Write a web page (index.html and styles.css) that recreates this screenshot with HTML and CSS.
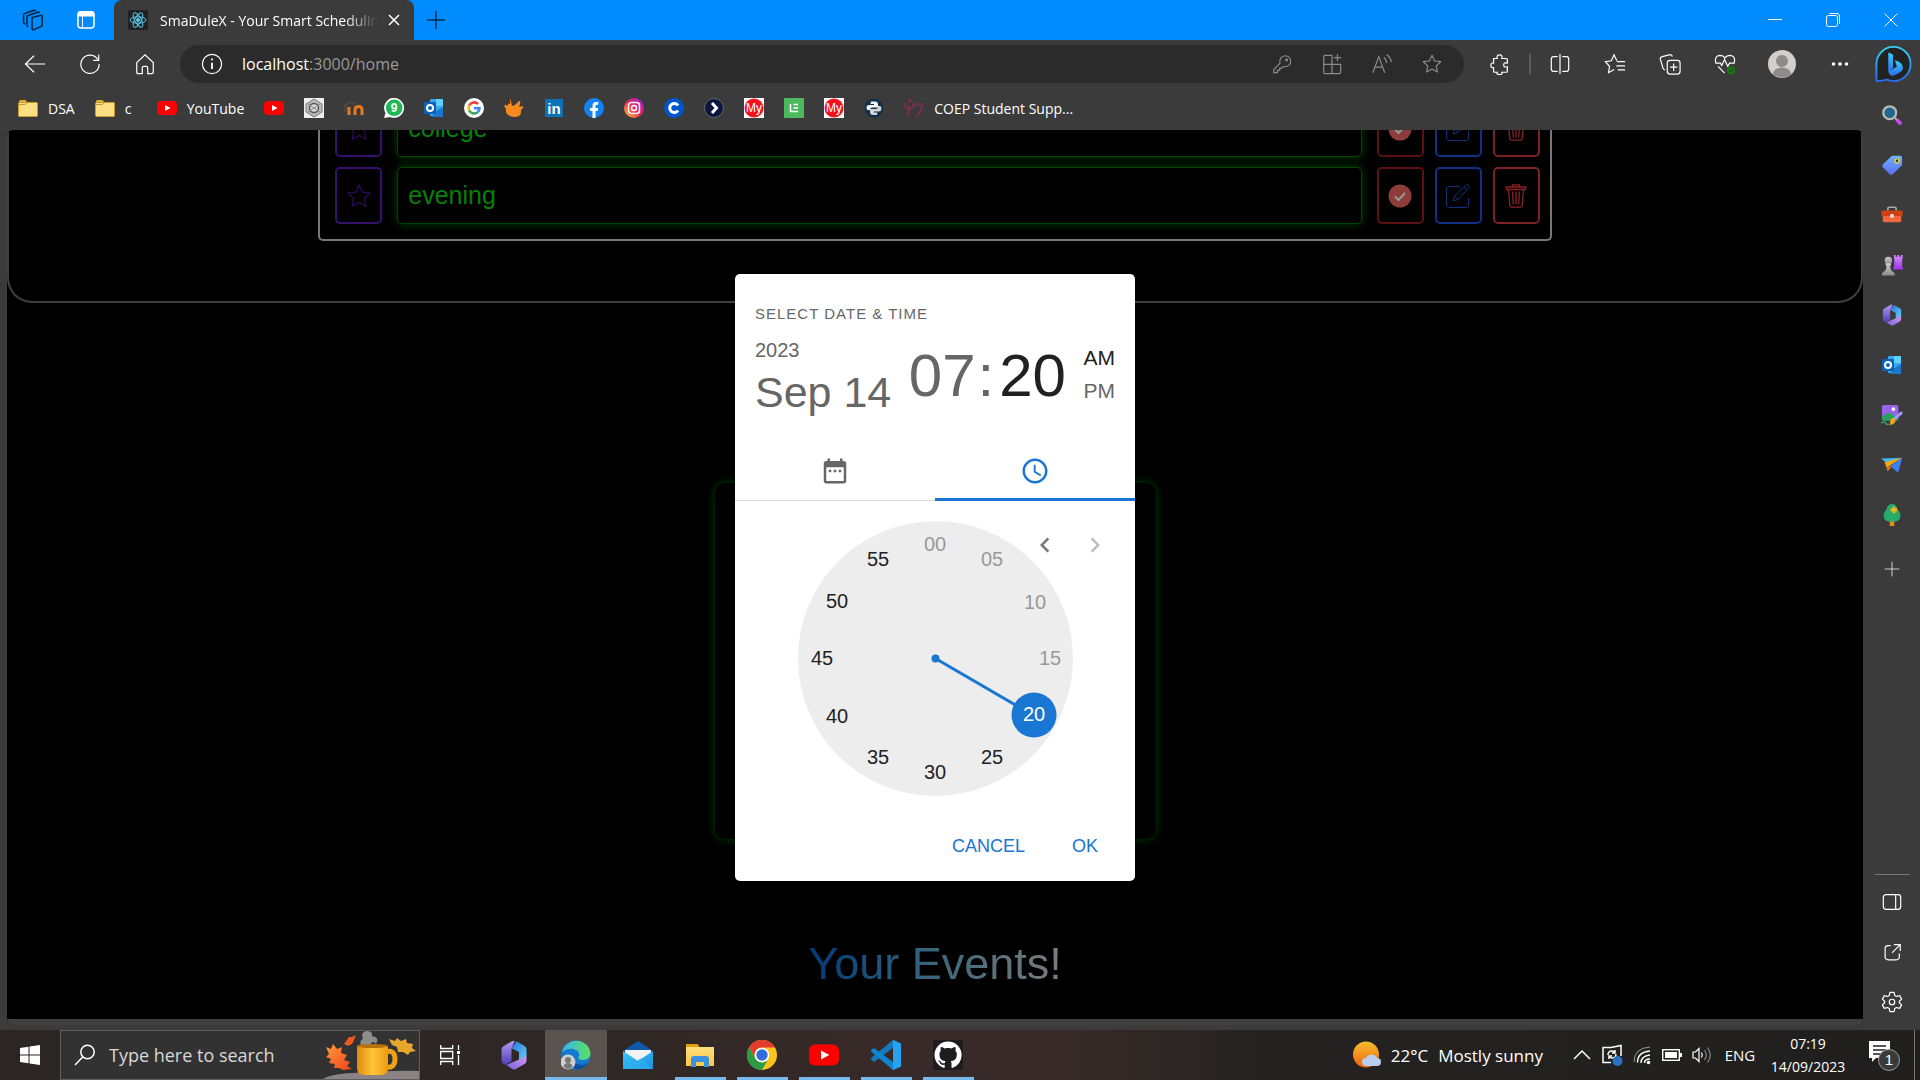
FILE: index.html
```html
<!DOCTYPE html>
<html lang="en">
<head>
<meta charset="utf-8">
<title>SmaDuleX - Your Smart Scheduling</title>
<link rel="stylesheet" href="styles.css">
</head>
<body>
<svg class="defs" aria-hidden="true">
  <defs>
    <linearGradient id="gOffA" x1="0" y1="0" x2="0" y2="1"><stop offset="0" stop-color="#b79af0"/><stop offset="1" stop-color="#4a3fb8"/></linearGradient>
    <linearGradient id="gOffB" x1="0" y1="0" x2="1" y2="1"><stop offset="0" stop-color="#2f6fe0"/><stop offset="1" stop-color="#5fd3f5"/></linearGradient>
    <linearGradient id="gOffC" x1="0" y1="1" x2="1" y2="0"><stop offset="0" stop-color="#7a5fe0"/><stop offset="1" stop-color="#d09af0"/></linearGradient>
    <linearGradient id="gEdge" x1="0" y1="0" x2="1" y2="0"><stop offset="0" stop-color="#35b5f0"/><stop offset="1" stop-color="#5ce05c"/></linearGradient>
    <linearGradient id="gBing" x1="0" y1="0" x2="0" y2="1"><stop offset="0" stop-color="#35d0f5"/><stop offset="1" stop-color="#2a6cf0"/></linearGradient>
    <linearGradient id="gInsta" x1="0" y1="1" x2="1" y2="0"><stop offset="0" stop-color="#ffc92e"/><stop offset=".5" stop-color="#f0255c"/><stop offset="1" stop-color="#8a1ff0"/></linearGradient>
    <linearGradient id="gTag" x1="0" y1="0" x2="0" y2="1"><stop offset="0" stop-color="#6fb4ff"/><stop offset="1" stop-color="#5b6af5"/></linearGradient>
    <linearGradient id="gPurple" x1="0" y1="0" x2="0" y2="1"><stop offset="0" stop-color="#d78cff"/><stop offset="1" stop-color="#a030f0"/></linearGradient>
    <linearGradient id="gGrey" x1="0" y1="0" x2="0" y2="1"><stop offset="0" stop-color="#ccc"/><stop offset="1" stop-color="#8c8c8c"/></linearGradient>
    <linearGradient id="gMug" x1="0" y1="0" x2="1" y2="0"><stop offset="0" stop-color="#e08a0c"/><stop offset=".5" stop-color="#ffc53a"/><stop offset="1" stop-color="#f09a10"/></linearGradient>
    <linearGradient id="gLeaf" x1="0" y1="0" x2="1" y2="1"><stop offset="0" stop-color="#ff9a3a"/><stop offset="1" stop-color="#f0431a"/></linearGradient>
    <linearGradient id="gSun" x1="0" y1="0" x2="0" y2="1"><stop offset="0" stop-color="#f8bd30"/><stop offset="1" stop-color="#f0650c"/></linearGradient>
    <linearGradient id="gMail" x1="0" y1="0" x2="1" y2="1"><stop offset="0" stop-color="#3cc8f5"/><stop offset="1" stop-color="#1b8fe0"/></linearGradient>
    <linearGradient id="gFolder" x1="0" y1="0" x2="0" y2="1"><stop offset="0" stop-color="#ffdf7c"/><stop offset="1" stop-color="#fbc846"/></linearGradient>
  </defs>
  <symbol id="folder" viewBox="0 0 20 20"><path d="M1 3.5A1.500 1.500 0 0 1 2.500 2h5l2 2.500H1z" fill="#e3b132"/><rect x=".5" y="4.500" width="19" height="14" rx="1" fill="#fbdf82" stroke="#c79b2c"/><path d="M.5 6.500h7l2-2.500" stroke="#c79b2c" fill="none"/></symbol>
  <symbol id="yt" viewBox="0 0 20 20"><rect y="3" width="20" height="14" rx="4" fill="#f00"/><path d="M8 7l5.500 3L8 13z" fill="#fff"/></symbol>
  <symbol id="my" viewBox="0 0 20 20"><rect width="20" height="20" fill="#fff"/><circle cx="10" cy="10" r="9.500" fill="#f0141e"/><text x="10" y="14" text-anchor="middle" font-size="12" fill="#fff">My</text></symbol>
  <symbol id="office" viewBox="0 0 24 24"><path d="M14 1l6.500 3.700q1.500.9 1.500 2.600V13l-6 3V9.500l-6-3z" fill="url(#gOffB)"/><path d="M22 12.500v4q0 1.700-1.500 2.600l-7 4q-1.500.8-3 0L6 20l9-4z" fill="url(#gOffC)"/><path d="M12.500.7L10 7v10l-5 3-1.500-.9Q2 18.200 2 16.500v-9q0-1.700 1.500-2.600l7-4q1-.5 2-.2z" fill="url(#gOffA)"/></symbol>
  <symbol id="outlook" viewBox="0 0 20 20"><rect x="6" y="1" width="13" height="17" rx="1" fill="#35a8ee"/><path d="M12 1h7v7h-7z" fill="#5fd0ff"/><path d="M8 19h11V9l-8 5z" fill="#1b78cc"/><rect y="4" width="12" height="12" rx="1" fill="#0b62b8"/><circle cx="6" cy="10" r="3" fill="none" stroke="#fff" stroke-width="2"/></symbol>
  <symbol id="star" viewBox="0 0 24 24"><path d="M12 2.500l2.900 6.200 6.600.8-4.900 4.600 1.300 6.700L12 17.500l-5.900 3.300 1.300-6.700-4.900-4.600 6.600-.8z" fill="none" stroke="currentColor" stroke-linejoin="round"/></symbol>
  <symbol id="done" viewBox="0 0 24 24"><circle cx="12" cy="12" r="11.500" fill="#8c3c3a"/><path d="M7 12.500l3.500 3.500 6.500-7" fill="none" stroke="#999" stroke-width="2"/></symbol>
  <symbol id="edit" viewBox="0 0 24 24"><path d="M14 2.500H3A2.500 2.500 0 0 0 .5 5v16A2.500 2.500 0 0 0 3 23.500h17a2.500 2.500 0 0 0 2.500-2.500v-7M20 1q1.200-1 2.500.2t.4 2.500L12 15.500 7 17l1.500-5zM18 3.500l3 2.500M8.500 12l3.500 3.500" fill="none" stroke="currentColor" stroke-linejoin="round"/></symbol>
  <symbol id="trash" viewBox="0 0 24 24"><path d="M2.500 5.500V3h19v2.500zM8.500 3V.8h7V3M4.500 5.500l1.300 16.200q.1 1.500 1.600 1.500h9.200q1.500 0 1.600-1.500l1.300-16.200M8.500 7.500l.8 13M12 7.500v13M15.500 7.500l-.8 13" fill="none" stroke="currentColor" stroke-width="1.300"/></symbol>
</svg>

<header class="titlebar">
  <button class="tb-btn" aria-label="Workspaces"><svg width="22" height="22" viewBox="0 0 24 24" fill="none" stroke="#06213c" stroke-width="1.600" stroke-linejoin="round"><path d="M10 9.500L20 7q2-.4 2 1.500v9q0 1-1 1.500l-8 3.500q-2 .6-2-1.500V11q0-1 1-1.500M7 19.500l-1-.5q-.5-.3-.5-1V8.500q0-1 1-1.400L17 3.500q1.500-.5 1.800 1M4 16.500l-1.500-.8q-.8-.4-.8-1.200V6.500q0-1 1-1.400L13 1.400q1.500-.4 1.800 1"/></svg></button>
  <button class="tb-btn" aria-label="Tab actions"><svg width="20" height="20" viewBox="0 0 20 20"><rect x="2" y="2" width="16" height="16" rx="3" fill="none" stroke="#fff" stroke-width="1.500"/><path d="M1.500 6.500V4q0-3 3-3h11q3 0 3 3v2.500z" fill="#fff"/><path d="M6.500 6v12" stroke="#fff"/></svg></button>
  <div class="tab">
    <svg width="20" height="20" viewBox="0 0 20 20" fill="none" stroke="#5cc9e6"><rect width="20" height="20" rx="2" fill="#202226" stroke="none"/><ellipse cx="10" cy="10" rx="8" ry="3.200"/><ellipse cx="10" cy="10" rx="8" ry="3.200" transform="rotate(60 10 10)"/><ellipse cx="10" cy="10" rx="8" ry="3.200" transform="rotate(120 10 10)"/><circle cx="10" cy="10" r="1.500" fill="#5cc9e6"/></svg>
    <span class="tab-title">SmaDuleX - Your Smart Scheduling</span>
    <button class="tab-close" aria-label="Close tab"><svg width="12" height="12" viewBox="0 0 12 12" stroke="#fff" stroke-width="1.500"><path d="M1 1l10 10M11 1L1 11"/></svg></button>
  </div>
  <button class="new-tab" aria-label="New tab"><svg width="18" height="18" viewBox="0 0 18 18" stroke="#000"><path d="M9 0v18M0 9h18"/></svg></button>
  <div class="spacer"></div>
  <button class="win-btn" aria-label="Minimise"><svg width="14" height="14" viewBox="0 0 14 14" stroke="#fff"><path d="M0 6.500h14"/></svg></button>
  <button class="win-btn" aria-label="Restore"><svg width="14" height="14" viewBox="0 0 14 14" fill="none" stroke="#fff"><rect x=".5" y="2.500" width="11" height="11" rx="2"/><path d="M3.500.5H11q2.500 0 2.500 2.500v8"/></svg></button>
  <button class="win-btn" aria-label="Close"><svg width="14" height="14" viewBox="0 0 14 14" stroke="#fff"><path d="M.5.5l13 13M13.500.5l-13 13"/></svg></button>
</header>

<nav class="toolbar" aria-label="Browser toolbar">
  <button class="tool" aria-label="Back"><svg class="i" viewBox="0 0 24 24"><path d="M23 12H2M11 3l-9.500 9L11 21"/></svg></button>
  <button class="tool" aria-label="Reload"><svg class="i" viewBox="0 0 24 24"><path d="M20.500 7A10 10 0 1 0 22 12M21.500 2v6h-6"/></svg></button>
  <button class="tool" aria-label="Home"><svg class="i" viewBox="0 0 24 24"><path d="M3 10.500L12 2l9 8.500V21q0 1.500-1.500 1.500H15V16q0-1.500-1.500-1.500h-3Q9 14.500 9 16v6.500H4.500Q3 22.500 3 21z"/></svg></button>
  <div class="address">
    <button class="info" aria-label="Site information"><svg class="i" viewBox="0 0 24 24"><circle cx="12" cy="12" r="10.500"/><path d="M12 10.500v7M12 6v2" stroke-width="2"/></svg></button>
    <div class="url" role="textbox" aria-label="Address">localhost<span>:3000/home</span></div>
    <button class="addr-btn" aria-label="Passwords"><svg class="i" viewBox="0 0 24 24"><path d="M15.500 3a6 6 0 0 1 0 12q-1 0-2-.3L12 16.500H9.500V19H7v2.500H3V18l6.900-7A6 6 0 0 1 15.500 3z"/><circle cx="17" cy="7.500" r="1"/></svg></button>
    <button class="addr-btn" aria-label="Install app"><svg class="i" viewBox="0 0 24 24"><path d="M12 2.500H4.500Q3 2.500 3 4v17q0 1.500 1.500 1.500H20q1.500 0 1.500-1.500v-8.500H3M12 2.500v20M18 1v8M14 5h8"/></svg></button>
    <button class="addr-btn" aria-label="Read aloud"><svg class="i" viewBox="0 0 24 24"><path d="M2 21.500L8.500 4 15 21.500M4.500 15.500h8M14 5q3 2 3 6M17 2q5 3 5 8"/></svg></button>
    <button class="addr-btn" aria-label="Add to favourites"><svg class="i" viewBox="0 0 24 24"><use href="#star"/></svg></button>
  </div>
  <button class="tool" aria-label="Extensions"><svg class="i" viewBox="0 0 24 24"><path d="M5 6h4q-1-4 2.500-4T14 6h5q1 0 1 1v4q-4-1-4 2t4 2v5q0 1-1 1h-5q1 2.500-2.500 2.500T9 21H6q-1 0-1-1v-4q-3 .5-3-2.500T5 11z"/></svg></button>
  <span class="divider"></span>
  <button class="tool" aria-label="Split screen"><svg class="i" viewBox="0 0 24 24"><path d="M9.500 4H5Q2.500 4 2.500 6.500v11Q2.500 20 5 20h4.500M14.500 4H19q2.500 0 2.500 2.500v11Q21.500 20 19 20h-4.500M12 1v22"/></svg></button>
  <button class="tool" aria-label="Favourites"><svg class="i" viewBox="0 0 24 24"><path d="M14 8.500L11 2 8 8.500l-6.500 1L6 14.500 5 21.500l6-3.500M14 9.500h9M13.500 14H23M15 18.500h8"/></svg></button>
  <button class="tool" aria-label="Collections"><svg class="i" viewBox="0 0 24 24"><rect x="9" y="8" width="14" height="15" rx="3"/><path d="M6.500 18.500q-2-.5-2.300-2.500L1.500 7Q1 4.500 3.500 4L11 2q3-.7 3.500 2M16 11.500v8M12 15.500h8"/></svg></button>
  <button class="tool" aria-label="Browser essentials"><svg class="i" viewBox="0 0 24 24"><path d="M2 11Q0 3 6.500 2.500 10 2.500 12 5.500 14 2.500 17.500 2.500 24 3 22 11h-5l-2 3.500L11.500 7 8.500 13.500 7 11zM4.500 14.500l7 7.500"/><circle cx="18.500" cy="19" r="4.500" fill="#107c10" stroke="none"/><path d="M16.500 19l1.500 1.500 2.500-3" stroke="#3b3b3b"/></svg></button>
  <button class="tool tool-wide" aria-label="Profile"><svg width="28" height="28" viewBox="0 0 28 28"><circle cx="14" cy="14" r="14" fill="#d2d0ce"/><circle cx="14" cy="11" r="6" fill="#8f8b88"/><path d="M4.500 24q2-6.500 9.500-6.500T23.500 24a14 14 0 0 1-19 0z" fill="#8f8b88"/></svg></button>
  <button class="tool" aria-label="Settings and more"><svg width="18" height="18" viewBox="0 0 18 18" fill="#fff"><circle cx="2.500" cy="9" r="1.800"/><circle cx="9" cy="9" r="1.800"/><circle cx="15.500" cy="9" r="1.800"/></svg></button>
  <button class="bing" aria-label="Bing chat"><svg width="38" height="38" viewBox="0 0 40 40"><path d="M1.500 38V20A18.500 18.500 0 1 1 20 38.500q-4 0-8-1.500-4 1.500-10.500 1z" fill="#222"/><path d="M1.500 38V20A18 18 0 1 1 20 38q-4 0-8-1.500-4 1.500-10.500 1.500z" fill="none" stroke="url(#gBing)" stroke-width="2"/><path d="M14 8l5 2v14l-5 5z" fill="url(#gBing)"/><path d="M21 16q8 2 8.500 8 0 3-3.500 5l-7 3.500q-4 0-5-4.500l9-5z" fill="url(#gBing)"/></svg></button>
</nav>

<main class="browser">
  <div class="stage">
    <nav class="bookmarks" aria-label="Bookmarks">
      <a class="dir" href="#"><svg><use href="#folder"/></svg>DSA</a>
      <a class="dir" href="#"><svg><use href="#folder"/></svg>c</a>
      <a href="#"><svg><use href="#yt"/></svg>YouTube</a>
      <a href="#" aria-label="YouTube"><svg><use href="#yt"/></svg></a>
      <a href="#" aria-label="College"><svg viewBox="0 0 20 20"><rect width="20" height="20" fill="#eee"/><path d="M10 1l8 5v8l-8 5-8-5V6z" fill="#bbb" stroke="#777"/><circle cx="10" cy="10" r="4.500" fill="#ddd" stroke="#555" stroke-width="1.500"/><path d="M4 14l12-8M4 6l12 8" stroke="#888"/></svg></a>
      <a href="#" aria-label="Moodle"><svg viewBox="0 0 20 20" fill="none" stroke="#e67a22" stroke-width="3"><path d="M5 17V9M11 17v-5q0-3.500 3.500-3.500T18 12v5"/><path d="M0 8l6-4 5 2M1.500 8v6" stroke="#55473c" stroke-width="2"/></svg></a>
      <a href="#" aria-label="WhatsApp"><svg viewBox="0 0 20 20"><path d="M0 20l1.500-5A10 10 0 1 1 6 19z" fill="#fff"/><circle cx="10.200" cy="9.800" r="8.300" fill="#1fb855"/><text x="10" y="14" text-anchor="middle" font-size="12" font-weight="bold" fill="#fff">9</text></svg></a>
      <a href="#" aria-label="Outlook"><svg><use href="#outlook"/></svg></a>
      <a href="#" aria-label="Google"><svg viewBox="0 0 20 20" fill="none" stroke-width="2.600"><circle cx="10" cy="10" r="10" fill="#fff"/><path d="M14 6A5.500 5.500 0 0 0 5.200 7.500" stroke="#ea4335"/><path d="M5.200 7.500a5.500 5.500 0 0 0 0 5" stroke="#fbbc05"/><path d="M5.200 12.500a5.500 5.500 0 0 0 8.600 1.600" stroke="#34a853"/><path d="M13.800 14.100q1.700-1.600 1.700-3.800H10" stroke="#4285f4"/></svg></a>
      <a href="#" aria-label="Firebase"><svg viewBox="0 0 20 20"><path d="M4 2q2-2 3 1l1 5 3-1 4-4q2 0 1 3l-1 3 4-1q1 2-2 4 1 7-7 7Q1 18 2 11L0 8q2-2 4 0z" fill="#f58a1f"/><path d="M3 0q4 1 3 6l-3-1z" fill="#5a2c10"/></svg></a>
      <a href="#" aria-label="LinkedIn"><svg viewBox="0 0 20 20"><rect x="1" y="1" width="18" height="18" fill="#0a73b8"/><text x="10" y="15.500" text-anchor="middle" font-size="15" font-weight="bold" fill="#fff">in</text></svg></a>
      <a href="#" aria-label="Facebook"><svg viewBox="0 0 20 20"><circle cx="10" cy="10" r="10" fill="#1383f2"/><path d="M8.500 20v-7H6v-3h2.500V8q0-4 3.800-4h2v2.800h-1.500q-1.300 0-1.300 1.400V10h2.700l-.5 3h-2.200v7z" fill="#fff"/></svg></a>
      <a href="#" aria-label="Instagram"><svg viewBox="0 0 20 20" fill="none" stroke="#fff" stroke-width="1.500"><circle cx="10" cy="10" r="10" fill="url(#gInsta)" stroke="none"/><rect x="4.500" y="4.500" width="11" height="11" rx="3"/><circle cx="10" cy="10" r="2.500"/></svg></a>
      <a href="#" aria-label="Coursera"><svg viewBox="0 0 20 20"><circle cx="10" cy="10" r="10" fill="#0056d2"/><path d="M14 7.500a4.500 4.500 0 1 0 0 5" fill="none" stroke="#fff" stroke-width="3"/></svg></a>
      <a href="#" aria-label="Scaler"><svg viewBox="0 0 20 20"><circle cx="10" cy="10" r="9.500" fill="#0c1740" stroke="#666"/><path d="M8 5l4.500 5L8 15" fill="none" stroke="#fff" stroke-width="3"/></svg></a>
      <a href="#" aria-label="My portal"><svg><use href="#my"/></svg></a>
      <a href="#" aria-label="LE"><svg viewBox="0 0 20 20" fill="none" stroke="#fff" stroke-width="1.500"><rect width="20" height="20" fill="#4db860" stroke="none"/><path d="M6.500 6v7.500H14M9.500 6.500H14M9.500 10H14"/></svg></a>
      <a href="#" aria-label="My account"><svg><use href="#my"/></svg></a>
      <a href="#" aria-label="Python"><svg viewBox="0 0 20 20"><circle cx="10" cy="10" r="9.500" fill="#123049"/><path d="M7 3.500h4q3 0 3 3v3H8Q6 9.500 6 12H4Q2.500 12 2.500 9.500T5 7h5V6H6.500z" fill="#f4f4f4"/><path d="M13 17H9q-3 0-3-3v-3h6q2 0 2-3h2q1.500 0 1.500 2.500T15 13.500h-5v1h3.500z" fill="#d4d4d4"/></svg></a>
      <a href="#"><svg viewBox="0 0 20 20" fill="none" stroke="#8c2a50" stroke-width="1.600"><path d="M4 7q3 4-1 12M1 5q0 6 4 6 3 0 5-5M10 8q2-4 4-1 3-3 4 0 0 6-6 12"/><circle cx="6" cy="3" r="1"/></svg>COEP Student Supp...</a>
    </nav>

    <div class="viewport">
      <div class="page">
        <section class="tasks">
          <ul class="task-list">
            <li>
              <button class="sq sq-star" aria-label="Star college"><svg><use href="#star"/></svg></button>
              <input class="task" type="text" value="college" aria-label="Task college" readonly>
              <div class="actions">
                <button class="sq sq-done" aria-label="Done"><svg><use href="#done"/></svg></button>
                <button class="sq sq-edit" aria-label="Edit"><svg><use href="#edit"/></svg></button>
                <button class="sq sq-trash" aria-label="Delete"><svg><use href="#trash"/></svg></button>
              </div>
            </li>
            <li>
              <button class="sq sq-star" aria-label="Star evening"><svg><use href="#star"/></svg></button>
              <input class="task" type="text" value="evening" aria-label="Task evening" readonly>
              <div class="actions">
                <button class="sq sq-done" aria-label="Done"><svg><use href="#done"/></svg></button>
                <button class="sq sq-edit" aria-label="Edit"><svg><use href="#edit"/></svg></button>
                <button class="sq sq-trash" aria-label="Delete"><svg><use href="#trash"/></svg></button>
              </div>
            </li>
          </ul>
        </section>
        <section class="event-card"></section>
        <h2 class="events-title">Your Events!</h2>
      </div>
      <div class="overlay">
        <div class="dialog" role="dialog" aria-label="Select date and time">
          <div class="dlg-head">
            <div class="overline">SELECT DATE &amp; TIME</div>
            <div class="dlg-values">
              <div class="dlg-date">
                <button class="year">2023</button>
                <button class="day">Sep 14</button>
              </div>
              <div class="dlg-time">
                <button class="big">07</button><span class="big colon">:</span><button class="big on">20</button>
              </div>
              <div class="ampm">
                <button class="on">AM</button>
                <button>PM</button>
              </div>
            </div>
          </div>
          <div class="dlg-tabs" role="tablist">
            <button role="tab" aria-label="Pick date"><svg viewBox="0 0 24 24"><path d="M9 11H7v2h2v-2zm4 0h-2v2h2v-2zm4 0h-2v2h2v-2zm2-7h-1V2h-2v2H8V2H6v2H5c-1.110 0-1.990.9-1.990 2L3 20c0 1.100.89 2 2 2h14c1.100 0 2-.9 2-2V6c0-1.100-.9-2-2-2zm0 16H5V9h14v11z"/></svg></button>
            <button class="selected" role="tab" aria-label="Pick time"><svg viewBox="0 0 24 24"><path d="M11.990 2C6.470 2 2 6.480 2 12s4.470 10 9.990 10C17.520 22 22 17.520 22 12S17.520 2 11.990 2zM12 20c-4.420 0-8-3.580-8-8s3.580-8 8-8 8 3.580 8 8-3.580 8-8 8z"/><path d="M12.500 7H11v6l5.250 3.150.75-1.230-4.500-2.670z"/></svg></button>
          </div>
          <div class="clock">
            <svg class="dial" viewBox="0 0 275 275">
              <circle cx="137.500" cy="137.500" r="137.500" fill="#ededed"/>
              <path d="M137.500 137.500l98 57" stroke="#1976d2" stroke-width="3"/>
              <circle cx="137.500" cy="137.500" r="4" fill="#1976d2"/>
              <circle cx="236" cy="194" r="22.500" fill="#1976d2"/>
              <g class="off"><text x="137" y="30">00</text><text x="194" y="45">05</text><text x="237" y="88">10</text><text x="252" y="144">15</text></g>
              <text class="picked" x="236" y="200">20</text>
              <g><text x="194" y="243">25</text><text x="137" y="258">30</text><text x="80" y="243">35</text><text x="39" y="202">40</text><text x="24" y="144">45</text><text x="39" y="87">50</text><text x="80" y="45">55</text></g>
            </svg>
            <div class="arrows">
              <button aria-label="Previous"><svg viewBox="0 0 24 24"><path d="M15.410 16.590L10.830 12l4.580-4.590L14 6l-6 6 6 6 1.410-1.410z"/></svg></button>
              <button aria-label="Next" disabled><svg viewBox="0 0 24 24"><path d="M8.590 16.590L13.170 12 8.590 7.410 10 6l6 6-6 6-1.410-1.410z"/></svg></button>
            </div>
          </div>
          <div class="dlg-actions">
            <button>CANCEL</button>
            <button>OK</button>
          </div>
        </div>
      </div>
      <div class="hscroll"></div>
    </div>
  </div>

  <aside class="sidebar">
    <button aria-label="Search"><svg viewBox="0 0 24 24"><path d="M15 15l6 6" stroke="#b8b8b8" stroke-width="2"/><path d="M17 17l5 5" stroke="#c548f5" stroke-width="4"/><circle cx="9.500" cy="9.500" r="7" fill="#1f6690" stroke="#b9b9b4" stroke-width="2.500"/></svg></button>
    <button aria-label="Shopping"><svg viewBox="0 0 24 24"><path d="M12 2h9q2 0 2 2v8L13 22q-2 1.500-3.500 0L2 14.500q-1.200-1.500 0-3z" fill="url(#gTag)"/><circle cx="17.500" cy="7.500" r="2.200" fill="#245" stroke="#f5d020" stroke-width="1.500"/></svg></button>
    <button aria-label="Tools"><svg viewBox="0 0 24 24"><path d="M7.500 7V5q0-1.500 1.500-1.500h6q1.500 0 1.500 1.500v2" fill="none" stroke="#aaa" stroke-width="1.800"/><rect x="2" y="10" width="20" height="10" rx="1.500" fill="#f0683c"/><rect x=".5" y="7" width="23" height="6" rx="1" fill="#cf4010"/><rect x="10" y="11" width="4" height="4" rx="1" fill="#ddd"/></svg></button>
    <button aria-label="Games"><svg viewBox="0 0 24 24"><path d="M14 1h2v2h2V1h2v2h2V1h2l-1 6v6l1.500 4H13l1.500-4V7z" fill="url(#gPurple)"/><circle cx="8" cy="7" r="4" fill="url(#gGrey)"/><path d="M5 10h6v2l-1 1q0 5 4 7 1 1 1 3.500H1Q1 21 2 20q4-2 4-7l-1-1z" fill="url(#gGrey)"/></svg></button>
    <button aria-label="Microsoft 365"><svg><use href="#office"/></svg></button>
    <button aria-label="Outlook"><svg viewBox="-1 -1 22 22"><use href="#outlook" width="20" height="20"/></svg></button>
    <button aria-label="Designer"><svg viewBox="0 0 24 24"><rect x="1" y="1" width="18" height="17" rx="2" fill="#9b62ea"/><path d="M1 14l6-4q2-1 4 0l7 6v2H1z" fill="#22a45a"/><circle cx="13.500" cy="5.500" r="2" fill="#fff"/><path d="M14 17l9-8" stroke="#9aa4f5" stroke-width="3"/><path d="M10 20q0-5 4-5l2 3q-1 4-6 5z" fill="#f5a81c"/><path d="M0 21q4-3 5 0 1 2 4 1" stroke="#2fae6a" fill="none" stroke-width="1.500"/></svg></button>
    <button aria-label="Drop"><svg viewBox="0 0 24 24"><path d="M0 5l23-1L9 12z" fill="#46b8ea"/><path d="M23 4L10 13l8 7q1 0 1.500-2z" fill="#3b7ff0"/><path d="M23 4L4 9l2 6z" fill="#f5a50c"/><path d="M6 15l4-2 1 2-4 4z" fill="#d8780c"/></svg></button>
    <button aria-label="Tree"><svg viewBox="0 0 24 24"><rect x="9.500" y="16" width="5" height="8" fill="#e08c10"/><path d="M12 0q5 0 6 6 4 3 3 8-1 5-5 5H8q-4 0-5-5-1-5 3-8 1-6 6-6z" fill="#27ab6c"/><path d="M14 3v7M10.500 6.500h7" stroke="#f5b91c" stroke-width="3"/></svg></button>
    <button class="add" aria-label="Customise"><svg viewBox="0 0 24 24" stroke="#ddd"><path d="M12 4v16M4 12h16"/></svg></button>
    <span class="side-rule"></span>
    <button aria-label="Hide sidebar"><svg class="i" viewBox="0 0 24 24"><rect x="2.500" y="4" width="19" height="16" rx="3"/><path d="M16 4v16"/></svg></button>
    <button aria-label="Open link"><svg class="i" viewBox="0 0 24 24"><path d="M10.500 5H8Q4.500 5 4.500 8v9q0 3.500 3.500 3.500h8.500q3.500 0 3.500-3.500v-3.500M14 4h7v7M21 4l-9 9"/></svg></button>
    <button aria-label="Settings"><svg class="i" viewBox="0 0 24 24"><path d="M9.800 1.500h4.400l.8 3.300 2 1.200 3.300-1 2.200 3.900-2.500 2.300v1.600l2.500 2.300-2.200 3.900-3.300-1-2 1.200-.8 3.300H9.800L9 19.200l-2-1.200-3.300 1-2.200-3.900L4 12.800v-1.600L1.500 8.900 3.700 5 7 6l2-1.200z" stroke-linejoin="round"/><circle cx="12" cy="12" r="3"/></svg></button>
  </aside>
</main>

<footer class="taskbar">
  <button class="start" aria-label="Start"><svg width="20" height="20" viewBox="0 0 20 20" fill="#fff"><path d="M0 3l8.500-1.300v7.800H0zM9.500 1.500L20 0v9.500H9.500zM0 10.500h8.500v7.800L0 17zM9.500 10.500H20V20L9.500 18.500z"/></svg></button>
  <label class="search">
    <svg width="22" height="22" viewBox="0 0 22 22" fill="none" stroke="#fff" stroke-width="1.500"><circle cx="13.500" cy="8" r="6.700"/><path d="M8.700 13L1 21"/></svg>
    <input type="text" placeholder="Type here to search" aria-label="Search">
    <svg class="mug" width="96" height="48" viewBox="0 0 96 48"><path d="M0 48Q8 43 30 42q40-3 68-2v8z" fill="#8b8284"/><path d="M38 15q-2-6 2-7-3-6 3-8 7 0 6 5 8 1 4 8-4-5-6 2z" fill="#8d8d8d"/><path d="M62 21q10-3 10 7t-10 8" fill="none" stroke="#f0a014" stroke-width="5"/><path d="M34 15h31v22q0 7-7 7H41q-7 0-7-7z" fill="url(#gMug)"/><ellipse cx="49.500" cy="15" rx="15.500" ry="2" fill="#b8720c"/><path d="M3 16l5 2 2-5 4 5 5-2-1 6 6 2-3 5 6 2-3 4 5 3-9 1-4-2-5 0 1-4-6-1 2-4-5-2 3-3z" fill="url(#gLeaf)"/><path d="M21 13l3-4 2-3 3 0 4-2-2 5-2 4-4 2z" fill="#f05a20"/><path d="M66 8l6 2 2-3 4 3 5-2 1 4 6 1-1 4 4 3-6 1-2 3-5-3-5 0-1-5-5-2z" fill="#e6a72c"/></svg>
  </label>
  <button class="app taskview" aria-label="Task view"><svg width="20" height="22" viewBox="0 0 20 22" fill="none" stroke="#fff" stroke-width="1.300"><path d="M.7 1v3.500h12V1M.7 21v-3.500h12V21M.7 7.500h12v7H.7zM18.500 1v5M18.500 11v10"/><path d="M17 8.500h3" stroke-width="3"/></svg></button>
  <button class="app" aria-label="Microsoft 365"><svg width="30" height="30"><use href="#office"/></svg></button>
  <button class="app run active" aria-label="Edge"><svg width="30" height="30" viewBox="0 0 30 30"><circle cx="15" cy="15" r="14.500" fill="#1479cf"/><path d="M1 12A14.500 14.500 0 0 1 29.500 13q0 7-8 7-5 0-4-3 2-3-1-6Q10 6 1 12z" fill="url(#gEdge)"/><path d="M11 15q0 9 9 10 4 0 7-2-5 7-12 6.500Q8 26 11 15z" fill="#0c4f9e"/><circle cx="7" cy="22" r="7.500" fill="#cfcfcf"/><circle cx="7" cy="20" r="3" fill="#777"/><path d="M2.500 27q.5-4 4.500-4t4.500 4q-4 4-9 0z" fill="#777"/></svg></button>
  <button class="app" aria-label="Mail"><svg width="30" height="30" viewBox="0 0 30 30"><path d="M0 11L15 1l15 10z" fill="#0d5bad"/><path d="M2 10h26v12H2z" fill="#f2f2f2"/><path d="M0 11l15 10L30 11v18H0z" fill="url(#gMail)"/><path d="M0 29L18 18l12 11z" fill="#2fb2f0" opacity=".6"/></svg></button>
  <button class="app run" aria-label="File Explorer"><svg width="28" height="28" viewBox="0 0 28 28"><path d="M0 3h12l2 4H0z" fill="#e0a010"/><path d="M0 6h28v19H0z" fill="url(#gFolder)"/><path d="M5 26V18q0-3 3-3h12q3 0 3 3v8h-5v-5h-8v5z" fill="#3b93dd"/></svg></button>
  <button class="app run" aria-label="Chrome"><svg width="30" height="30" viewBox="0 0 30 30"><circle cx="15" cy="15" r="15" fill="#fcc31e"/><path d="M2 7.500A15 15 0 0 1 28 7.500H15A7.500 7.500 0 0 0 8 18z" fill="#e33b2e"/><path d="M2 7.500L8.500 18.700A7.500 7.500 0 0 0 21 19.500L15 30A15 15 0 0 1 2 7.500z" fill="#2a9c47"/><circle cx="15" cy="15" r="7.300" fill="#fff"/><circle cx="15" cy="15" r="5.700" fill="#2f6de0"/></svg></button>
  <button class="app run" aria-label="YouTube"><svg width="30" height="30"><use href="#yt"/></svg></button>
  <button class="app run" aria-label="Visual Studio Code"><svg width="30" height="30" viewBox="0 0 30 30"><path d="M22 0l8 3.500v23L22 30V8L3 22l-3-2.500v-1.500z" fill="#1578bd"/><path d="M22 30L0 11.500V10l3-2 19 14z" fill="#0f84d0"/><path d="M22 0l8 3.500v23L22 30z" fill="#27a2ef"/></svg></button>
  <button class="app run" aria-label="GitHub"><svg width="30" height="30" viewBox="0 0 30 30"><rect width="30" height="30" fill="#1f1c20"/><path transform="translate(1.500 1.500) scale(1.700)" fill="#fff" d="M8 0C3.580 0 0 3.580 0 8c0 3.540 2.290 6.530 5.470 7.590.4.070.55-.17.55-.38 0-.19-.01-.82-.01-1.490-2.010.37-2.530-.49-2.690-.94-.09-.23-.48-.94-.82-1.130-.28-.15-.68-.52-.01-.53.63-.01 1.080.58 1.230.82.72 1.210 1.870.87 2.330.66.07-.52.28-.87.51-1.070-1.780-.2-3.640-.89-3.640-3.950 0-.87.31-1.590.82-2.150-.08-.2-.36-1.020.08-2.120 0 0 .67-.21 2.200.82.64-.18 1.320-.27 2-.27.68 0 1.360.09 2 .27 1.530-1.040 2.200-.82 2.200-.82.44 1.100.16 1.920.08 2.120.51.56.82 1.270.82 2.150 0 3.070-1.870 3.750-3.650 3.950.29.25.54.73.54 1.480 0 1.070-.01 1.930-.01 2.200 0 .21.15.46.55.38A8.013 8.013 0 0 0 16 8c0-4.420-3.580-8-8-8z"/></svg></button>
  <div class="spacer"></div>
  <button class="weather"><svg width="28" height="28" viewBox="0 0 28 28"><circle cx="13" cy="13.500" r="13" fill="url(#gSun)"/><path d="M13 25a4 4 0 0 1 0-8 6 6 0 0 1 11 0 4 4 0 0 1 0 8z" fill="#b9cdf3"/></svg><span>22°C</span><span>Mostly sunny</span></button>
  <button class="tray" aria-label="Show hidden icons"><svg width="18" height="18" viewBox="0 0 18 18" fill="none" stroke="#fff" stroke-width="1.500"><path d="M1 13l8-8 8 8"/></svg></button>
  <button class="tray" aria-label="Update"><svg width="22" height="22" viewBox="0 0 22 22" fill="none" stroke="#fff" stroke-width="1.500"><path d="M20 12V1.500L10 3.500H2v15h8M7 11q0-4 4-4 2 0 3 2M14 6v3h-3M15 10q0 4-4 4-2 0-3-2M8 15v-3h3"/><circle cx="16.500" cy="17" r="5" fill="#2b72c4" stroke="none"/></svg></button>
  <button class="tray" aria-label="Wi-Fi"><svg width="18" height="20" viewBox="0 0 18 20" fill="none" stroke="#fff"><path d="M1 17Q1 3 17 2" stroke="#999"/><path d="M4.500 17.500Q4.500 7 17 6M8 18q0-7 9-8M11.500 18q0-4 5.500-4" stroke-width="1.300"/><circle cx="15.500" cy="17.500" r="1.800" fill="#fff" stroke="none"/></svg></button>
  <button class="tray" aria-label="Battery"><svg width="20" height="14" viewBox="0 0 20 14"><rect x=".7" y="1.700" width="16.600" height="10.600" fill="none" stroke="#fff" stroke-width="1.400"/><rect x="3" y="4" width="12" height="6" fill="#fff"/><path d="M18 5h2v4h-2z" fill="#fff"/></svg></button>
  <button class="tray" aria-label="Volume"><svg width="20" height="18" viewBox="0 0 20 18" fill="none" stroke="#fff" stroke-width="1.200"><path d="M1 6h2.500L7 2.500v13L3.500 12H1zM9.500 6.500q1.500 2.500 0 5"/><path d="M12.500 4q3.500 5 0 10M15.500 1.500q5.500 7.500 0 15" stroke="#888"/></svg></button>
  <button class="lang">ENG</button>
  <button class="datetime"><span>07:19</span><span>14/09/2023</span></button>
  <button class="notif" aria-label="Notifications"><svg width="34" height="34" viewBox="0 0 34 34"><path d="M2 3h21v17H9l-4 4v-4H2z" fill="#fff"/><path d="M6 8h13M6 12h13M6 16h8" stroke="#222" stroke-width="1.500"/><circle cx="22" cy="22" r="10.500" fill="#3a3a3a" stroke="#999"/><text x="22" y="27" text-anchor="middle" font-size="15" fill="#fff">1</text></svg></button>
</footer>
</body>
</html>
```
FILE: styles.css
```css
* { box-sizing: border-box; }

body {
  margin: 0;
  height: 100vh;
  display: flex;
  flex-direction: column;
  overflow: hidden;
  background: #3b3b3b;
  color: #fff;
  font-family: "Open Sans", "Noto Sans", sans-serif;
  font-size: 14px;
}

button {
  margin: 0;
  padding: 0;
  border: 0;
  background: none;
  color: inherit;
  font: inherit;
  display: flex;
  align-items: center;
  justify-content: center;
}

input { min-width: 0; font: inherit; outline: 0; }
a { color: inherit; text-decoration: none; }
svg { display: block; flex: none; }
.defs { position: absolute; width: 0; height: 0; }
.spacer { flex: 1; }
.i { width: 22px; height: 22px; fill: none; stroke: currentColor; stroke-width: 1.3; }

/* window title bar */
.titlebar { display: flex; height: 40px; flex: none; padding-left: 6px; background: #008cff; }
.tb-btn { width: 53px; }
.tab {
  display: flex;
  align-items: center;
  width: 300px;
  margin-left: 2px;
  padding: 0 4px 0 14px;
  background: #3b3b3b;
  border-radius: 8px 8px 0 0;
}
.tab-title {
  flex: 1;
  margin-left: 12px;
  overflow: hidden;
  white-space: nowrap;
  mask-image: linear-gradient(90deg, #000 85%, transparent);
}
.tab-close { width: 32px; height: 32px; }
.new-tab { width: 43px; }
.win-btn { width: 58px; }

/* toolbar */
.toolbar { display: flex; align-items: center; height: 48px; flex: none; padding-left: 7px; }
.tool { width: 55px; height: 40px; }
.tool-wide { width: 60px; }
.divider { width: 2px; height: 20px; margin: 0 1px 0 2px; background: #5c5c5c; }
.bing { width: 53px; height: 40px; }
.address {
  flex: 1;
  display: flex;
  align-items: center;
  height: 38px;
  margin: 0 8px;
  padding: 0 7px;
  border-radius: 19px;
  background: #2b2b2b;
}
.info { width: 50px; }
.url { flex: 1; margin-left: 5px; font-size: 16px; }
.url span { color: #999; }
.addr-btn { width: 50px; color: #8c8c8c; }

.browser { flex: 1; min-height: 0; display: flex; }
.stage { flex: 1; min-width: 0; display: flex; flex-direction: column; }

/* bookmarks */
.bookmarks { display: flex; align-items: center; gap: 20px; height: 42px; flex: none; padding: 0 0 2px 18px; }
.bookmarks a { display: flex; align-items: center; gap: 10px; white-space: nowrap; }
.bookmarks .dir { min-width: 42px; }
.bookmarks svg { width: 20px; height: 20px; font-family: "Liberation Sans", Arial, sans-serif; }

/* web page */
.viewport {
  position: relative;
  flex: 1;
  min-height: 0;
  display: flex;
  flex-direction: column;
  margin: 0 1px 5px 7px;
  overflow: hidden;
  border-radius: 6px;
  background: #000;
  font-family: "Liberation Sans", Arial, sans-serif;
}
.page { flex: 1; min-height: 0; display: flex; flex-direction: column; align-items: center; overflow: hidden; }
.hscroll { height: 6px; flex: none; background: #404040; }

.tasks {
  flex: none;
  width: 100%;
  margin-top: -30px;
  padding-bottom: 60px;
  border: 2px solid #404040;
  border-top: 0;
  border-radius: 0 0 25px 25px;
}
.task-list {
  display: flex;
  flex-direction: column;
  gap: 10px;
  width: 66.6%;
  margin: 0 auto;
  padding: 0 10px 15px 15px;
  border: 2px solid #777;
  border-top: 0;
  border-radius: 0 0 5px 5px;
  list-style: none;
}
.task-list li { display: flex; gap: 15px; height: 57px; }
.sq { width: 47px; height: 57px; border: 2px solid; border-radius: 5px; }
.sq svg { width: 24px; height: 24px; }
.sq-star { border-color: #35106c; color: #2c0d58; }
.sq-star svg { width: 28px; height: 28px; }
.sq-done { border-color: #5e1114; }
.sq-edit { border-color: #12308a; color: #10307c; }
.sq-trash { border-color: #7c2226; color: #8c2226; }
.task {
  flex: 1;
  padding: 0 10px;
  border: 1px solid #004600;
  border-radius: 5px;
  background: #000;
  box-shadow: 0 0 10px #004000;
  color: #088008;
  font-size: 25px;
}
.actions { display: flex; gap: 11px; }
.event-card {
  flex: none;
  width: 441px;
  height: 356px;
  margin: 180px 0 98px;
  border-radius: 10px;
  box-shadow: 0 0 10px #004000;
}
.events-title {
  flex: none;
  margin: 0;
  font-size: 45px;
  line-height: 54px;
  font-weight: 400;
  background: linear-gradient(90deg, #003a78, #34647c 45%, #7c7c7c);
  background-clip: text;
  -webkit-background-clip: text;
  color: transparent;
}

/* date and time dialog */
.overlay { position: absolute; inset: 0; display: grid; place-items: center; }
.dialog { width: 400px; border-radius: 5px; background: #fff; color: #666; overflow: hidden; }
.dlg-head { padding: 20px 20px 22px; }
.overline { font-size: 15px; line-height: 40px; letter-spacing: 1px; }
.dlg-values { display: flex; justify-content: space-between; align-items: flex-start; }
.dlg-date { display: flex; flex-direction: column; align-items: flex-start; }
.year { font-size: 20px; line-height: 32px; }
.day { font-size: 43px; line-height: 53px; }
.dlg-time { display: flex; padding-top: 7px; }
.big { font-size: 60px; line-height: 70px; }
.colon { margin: 0 5px 0 2px; }
.ampm { padding-top: 7px; font-size: 21px; line-height: 33px; }
.on { color: #212121; }
.dlg-tabs { display: flex; height: 60px; border-bottom: 1px solid #ddd; }
.dlg-tabs button { flex: 1; height: 60px; }
.dlg-tabs svg, .arrows svg { width: 30px; height: 30px; fill: currentColor; }
.dlg-tabs .selected { color: #1976d2; border-bottom: 3px solid; padding-top: 3px; }
.clock { position: relative; display: flex; justify-content: center; padding: 20px 0 15px; }
.dial { width: 275px; height: 275px; font-size: 20px; text-anchor: middle; fill: #212121; }
.dial .off { fill: #999; }
.dial .picked { fill: #fff; }
.arrows { position: absolute; top: 19px; right: 15px; display: flex; }
.arrows button { width: 50px; height: 50px; color: #757575; }
.arrows button:disabled { color: #bdbdbd; }
.dlg-actions { display: flex; justify-content: flex-end; gap: 10px; padding: 12px 10px; color: #1976d2; font-size: 18px; }
.dlg-actions button { min-width: 80px; height: 46px; padding: 0 10px; }

/* sidebar */
.sidebar { width: 56px; flex: none; display: flex; flex-direction: column; align-items: center; padding: 2px 0 3px; }
.sidebar button { width: 50px; height: 50px; }
.sidebar svg { width: 22px; height: 22px; }
.sidebar .add { margin-top: 4px; }
.side-rule { width: 35px; height: 1px; margin: auto 0 2px; background: #777; }

/* taskbar */
.taskbar {
  display: flex;
  height: 50px;
  flex: none;
  background: linear-gradient(90deg, #2b2523, #2e2725 30%, #382a28 48%, #382a28 55%, #242322 66%, #211f1e);
}
.start { width: 60px; }
.search {
  display: flex;
  align-items: center;
  width: 360px;
  padding-left: 13px;
  border: 1px solid #5e5e5e;
  background: #323232;
}
.search input { flex: 1; margin-left: 13px; padding: 0; border: 0; background: none; color: #fff; font-size: 18px; }
.search input::placeholder { color: #d8d8d8; opacity: 1; }
.app { width: 62px; }
.taskview { width: 60px; margin-right: 3px; }
.run { background: linear-gradient(#76b9ed, #76b9ed) center bottom / 51px 3px no-repeat; }
.active { background-size: 62px 3px; background-color: #5a534f; }
.weather { gap: 10px; margin-right: 24px; font-size: 17px; }
.tray { width: 30px; }
.lang { width: 46px; font-size: 15px; }
.datetime { width: 90px; flex-direction: column; line-height: 23px; }
.notif { width: 62px; border-right: 1px solid #777; margin-right: 5px; font-family: "Liberation Sans", Arial, sans-serif; }
```
